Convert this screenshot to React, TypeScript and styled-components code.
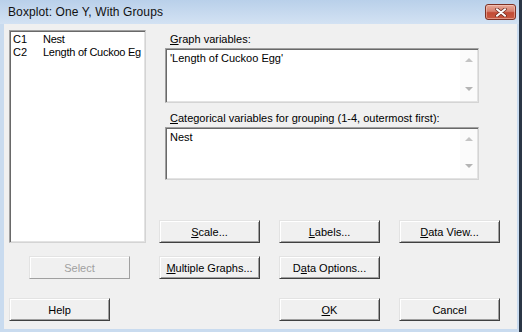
import styled, { createGlobalStyle } from "styled-components";

const GlobalStyle = createGlobalStyle`
    html, body {
        margin: 0;
        padding: 0;
        background: #ffffff;
    }
    body {
        font-family: "Liberation Sans", Arial, sans-serif;
        font-size: 11px;
        color: #000;
    }
`;

const Window = styled.div`
    width: 522px;
    height: 332px;
    box-sizing: border-box;
    display: flex;
    flex-direction: column;
    background: #c9dbef;
    border-right: 3px solid #2b3646;
    box-shadow: inset -2px 0 0 #c9dbef;
    position: relative;
`;

const TitleBar = styled.div`
    height: 24px;
    display: flex;
    align-items: center;
    padding-left: 8px;
    background: linear-gradient(#b9d0ea, #d3e2f3);
`;

const Title = styled.span`
    font-size: 12px;
    color: #111;
    letter-spacing: 0.1px;
`;

const CloseButton = styled.button`
    margin-left: auto;
    margin-right: 3px;
    width: 31px;
    height: 16px;
    padding: 0;
    border: 1px solid #7e3124;
    border-radius: 3px;
    background: linear-gradient(#e8a999 0%, #d6816f 45%, #c24b35 55%, #c85a42 100%);
    box-shadow: inset 0 0 0 1px rgba(255, 220, 210, 0.45);
    display: flex;
    align-items: center;
    justify-content: center;
`;

const Body = styled.div`
    flex: 1;
    margin: 0 2px 3px 4px;
    background: #f0f0f0;
    padding: 6px 0 0 5px;
    display: flex;
    flex-direction: column;
`;

const TopRow = styled.div`
    display: flex;
    align-items: flex-start;
`;

const Sunken = styled.div`
    box-sizing: border-box;
    background: #fff;
    border: 1px solid #a0a0a0;
    border-right-color: #d4d4d4;
    border-bottom-color: #d4d4d4;
    box-shadow: inset 1px 1px 0 #696969, inset -1px -1px 0 #e3e3e3;
`;

const VariableList = styled(Sunken)`
    width: 137px;
    height: 213px;
    padding: 2px 3px;
`;

const ListRow = styled.div`
    display: flex;
    height: 13px;
    line-height: 13px;
    white-space: nowrap;
    overflow: hidden;
`;

const ColumnId = styled.span`
    width: 30px;
    flex: none;
`;

const ColumnName = styled.span`
    letter-spacing: -0.25px;
`;

const RightColumn = styled.div`
    margin-left: 13px;
    width: 342px;
    display: flex;
    flex-direction: column;
`;

const FieldLabel = styled.div<{ $top: number }>`
    margin: ${(p) => p.$top}px 0 2px 11px;
    height: 13px;
    line-height: 13px;
    white-space: nowrap;
`;

const TextBox = styled(Sunken)<{ $height: number }>`
    margin-left: 6px;
    width: 314px;
    height: ${(p) => p.$height}px;
    display: flex;
`;

const TextContent = styled.div`
    flex: 1;
    padding: 3px 4px;
    line-height: 13px;
`;

const ScrollBar = styled.div`
    width: 17px;
    margin: 1px 1px 1px 0;
    background: #fbfbfb;
    display: flex;
    flex-direction: column;
    justify-content: space-between;
    align-items: center;
    padding: 8px 0 10px;
`;

const Arrow = styled.div<{ $down?: boolean }>`
    width: 0;
    height: 0;
    border-left: 4px solid transparent;
    border-right: 4px solid transparent;
    ${(p) =>
        p.$down
            ? "border-top: 4px solid #b4b4b4;"
            : "border-bottom: 4px solid #c4c4c4;"}
`;

const ButtonRow = styled.div<{ $top: number }>`
    display: flex;
    margin-top: ${(p) => p.$top}px;
`;

const DialogButton = styled.button<{ $offset?: number }>`
    box-sizing: border-box;
    width: 101px;
    height: 23px;
    margin-left: ${(p) => p.$offset ?? 0}px;
    padding: 0;
    font-family: "Liberation Sans", Arial, sans-serif;
    font-size: 11px;
    color: ${(p) => (p.disabled ? "#a0a0a0" : "#000")};
    background: #f0f0f0;
    border: 1px solid;
    border-color: #e3e3e3 #404040 #404040 #e3e3e3;
    box-shadow: inset 1px 1px 0 #ffffff, inset -1px -1px 0 #a0a0a0;
    ${(p) =>
        p.disabled
            ? "border-color: #e3e3e3 #a0a0a0 #a0a0a0 #e3e3e3; box-shadow: inset 1px 1px 0 #fff;"
            : ""}
`;

const Mn = styled.u`
    text-underline-offset: 1px;
`;

const ScrollingBox = ({ height, text }: { height: number; text: string }) => (
    <TextBox $height={height}>
        <TextContent>{text}</TextContent>
        <ScrollBar>
            <Arrow />
            <Arrow $down />
        </ScrollBar>
    </TextBox>
);

const App = () => {
    return (
        <>
            <GlobalStyle />
            <Window>
                <TitleBar>
                    <Title>Boxplot: One Y, With Groups</Title>
                    <CloseButton aria-label="Close">
                        <svg width="12" height="9" viewBox="0 0 12 9">
                            <path
                                d="M2 1.2 L10 7.8 M10 1.2 L2 7.8"
                                stroke="#6a2a20"
                                strokeWidth="3.4"
                                strokeLinecap="round"
                            />
                            <path
                                d="M2 1.2 L10 7.8 M10 1.2 L2 7.8"
                                stroke="#ffffff"
                                strokeWidth="2"
                                strokeLinecap="round"
                            />
                        </svg>
                    </CloseButton>
                </TitleBar>
                <Body>
                    <TopRow>
                        <VariableList>
                            <ListRow>
                                <ColumnId>C1</ColumnId>
                                <ColumnName>Nest</ColumnName>
                            </ListRow>
                            <ListRow>
                                <ColumnId>C2</ColumnId>
                                <ColumnName>Length of Cuckoo Eg</ColumnName>
                            </ListRow>
                        </VariableList>
                        <RightColumn>
                            <FieldLabel $top={3}>
                                <Mn>G</Mn>raph variables:
                            </FieldLabel>
                            <ScrollingBox height={55} text="'Length of Cuckoo Egg'" />
                            <FieldLabel $top={9}>
                                <Mn>C</Mn>ategorical variables for grouping (1-4, outermost first):
                            </FieldLabel>
                            <ScrollingBox height={53} text="Nest" />
                            <ButtonRow $top={40}>
                                <DialogButton>
                                    <Mn>S</Mn>cale...
                                </DialogButton>
                                <DialogButton $offset={19}>
                                    <Mn>L</Mn>abels...
                                </DialogButton>
                                <DialogButton $offset={19}>
                                    <Mn>D</Mn>ata View...
                                </DialogButton>
                            </ButtonRow>
                        </RightColumn>
                    </TopRow>
                    <ButtonRow $top={13}>
                        <DialogButton $offset={20} disabled>
                            Select
                        </DialogButton>
                        <DialogButton $offset={29}>
                            <Mn>M</Mn>ultiple Graphs...
                        </DialogButton>
                        <DialogButton $offset={19}>
                            D<Mn>a</Mn>ta Options...
                        </DialogButton>
                    </ButtonRow>
                    <ButtonRow $top={19}>
                        <DialogButton>Help</DialogButton>
                        <DialogButton $offset={169}>
                            <Mn>O</Mn>K
                        </DialogButton>
                        <DialogButton $offset={19}>Cancel</DialogButton>
                    </ButtonRow>
                </Body>
            </Window>
        </>
    );
};

export default App;
